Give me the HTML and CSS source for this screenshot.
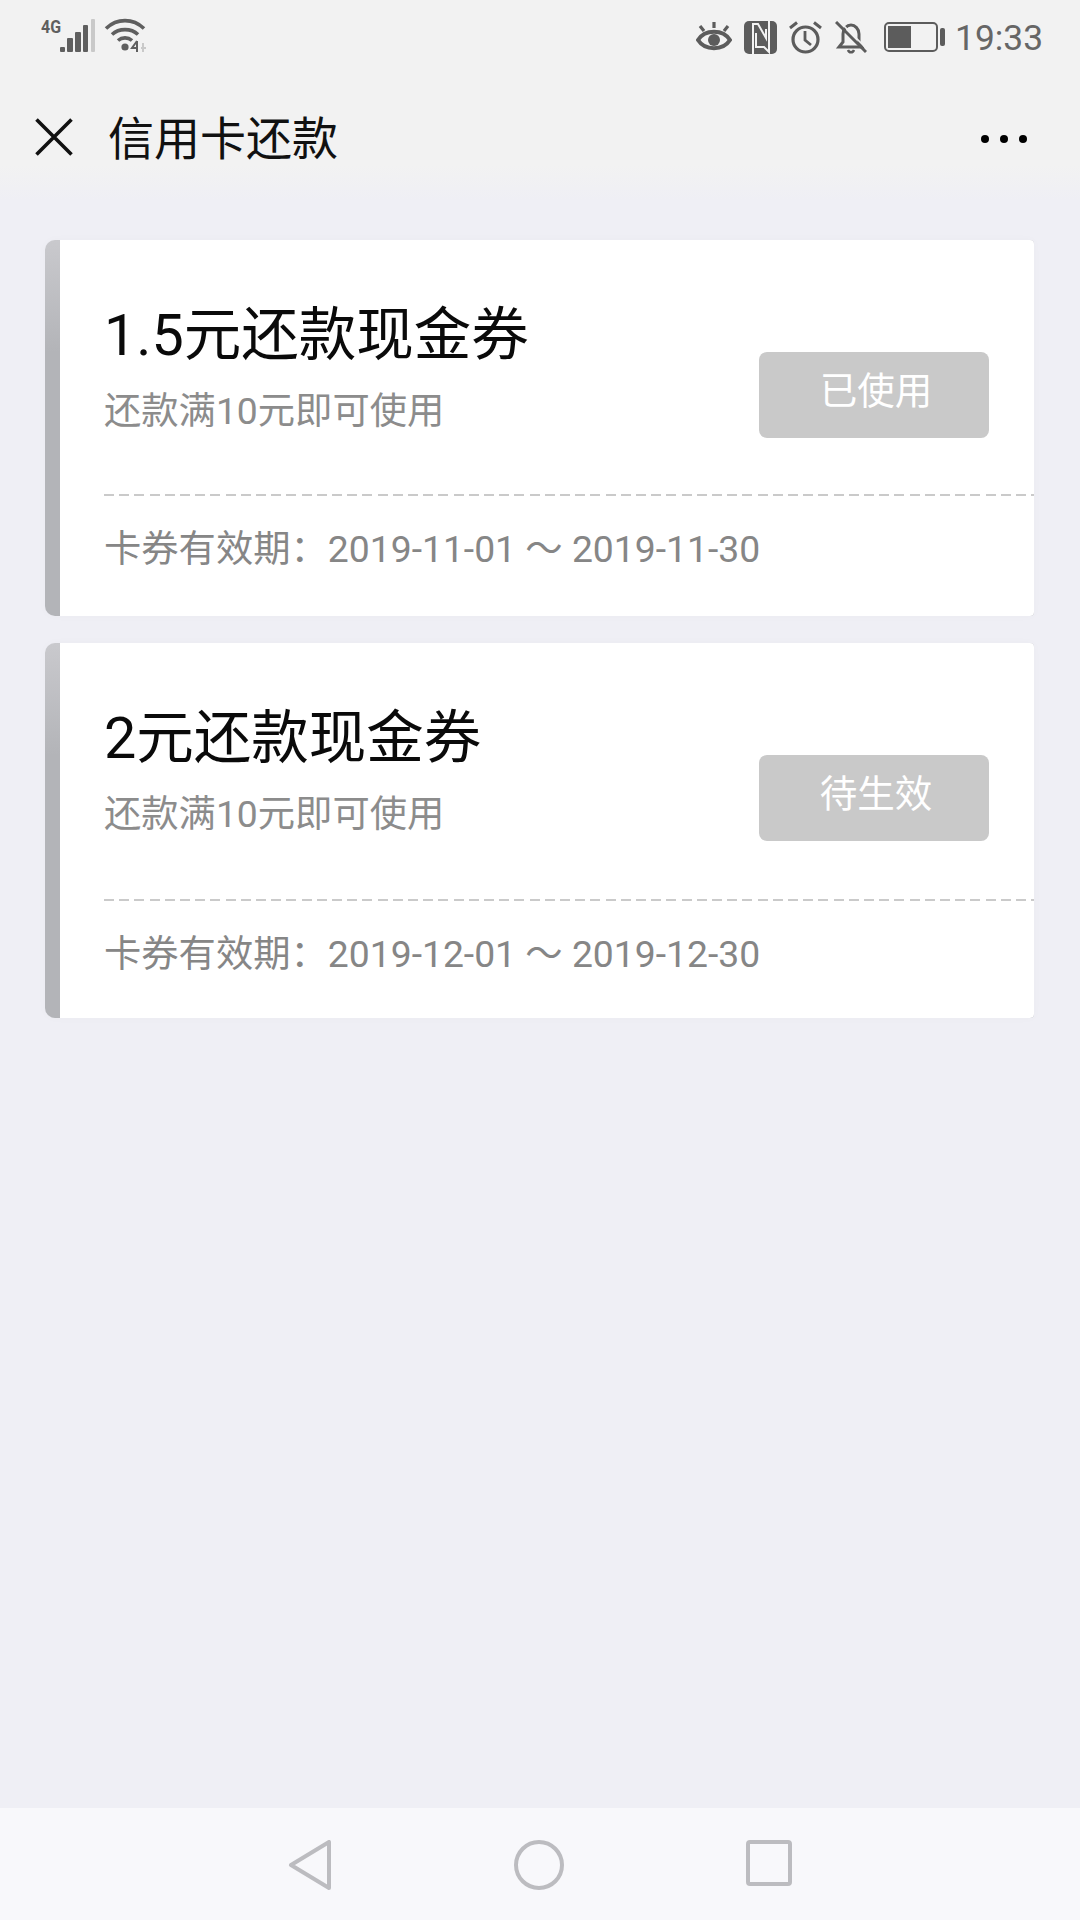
FILE: index.html
```html
<!DOCTYPE html>
<html lang="zh-CN">

<head>
  <meta charset="UTF-8">
  <meta name="viewport" content="width=device-width, initial-scale=1.0">
  <title>信用卡还款</title>
  <link rel="stylesheet" href="styles.css">
</head>

<body>
  <div class="top">
    <div class="status-bar">
      <svg class="signal" width="110" height="46" viewBox="0 -6 110 46">
        <text x="0" y="14" class="net-type" textLength="20" lengthAdjust="spacingAndGlyphs">4G</text>
        <rect x="19" y="28" width="5" height="5" rx="1" fill="#5f5f5f"/>
        <rect x="26" y="19" width="6" height="14" rx="1" fill="#5f5f5f"/>
        <rect x="34" y="13" width="6" height="20" rx="1" fill="#5f5f5f"/>
        <rect x="42" y="6" width="5" height="27" rx="1" fill="#5f5f5f"/>
        <rect x="50" y="0" width="4" height="33" rx="1" fill="#c9c9c9"/>
        <path d="M65 9.5 C76 -1 92 -1 103 9.5" fill="none" stroke="#5f5f5f" stroke-width="3.6"/>
        <path d="M71 15.5 C78 9 90 9 97 15.5" fill="none" stroke="#5f5f5f" stroke-width="3.6"/>
        <path d="M77 21.5 C81 18 87 18 91 21.5" fill="none" stroke="#5f5f5f" stroke-width="3.6"/>
        <circle cx="84" cy="28" r="3.6" fill="#5f5f5f"/>
        <path d="M96 22 L91 29 H97 M96 22 V33" fill="none" stroke="#5f5f5f" stroke-width="2"/>
        <path d="M102 24 V33 M100 29 H105" fill="none" stroke="#c9c9c9" stroke-width="2"/>
      </svg>
      <div class="status-right">
        <svg width="36" height="32" viewBox="0 0 36 32" class="ico-eye">
          <path d="M2 19 C9 8 27 8 34 19 C27 30 9 30 2 19 Z" fill="none" stroke="#5c5c5c" stroke-width="4"/>
          <circle cx="18" cy="19" r="6" fill="#5c5c5c"/>
          <path d="M18 1 V7 M4 5 L8 10 M32 5 L28 10" stroke="#5c5c5c" stroke-width="3.200" fill="none"/>
        </svg>
        <svg width="33" height="33" viewBox="0 0 33 33" class="ico-nfc">
          <rect width="33" height="33" rx="5" fill="#5c5c5c"/>
          <path d="M9 33 V3 H14 L22 17 V8 M12 12 V26 H20 L25 31 V0" fill="none" stroke="#f2f2f2" stroke-width="2"/>
        </svg>
        <svg width="33" height="33" viewBox="0 0 33 33" class="ico-alarm">
          <circle cx="16.500" cy="18.500" r="12.500" fill="none" stroke="#5c5c5c" stroke-width="3.200"/>
          <path d="M16 10 V19 L22 24" fill="none" stroke="#5c5c5c" stroke-width="2.800"/>
          <path d="M1 7 L8 1.500 M32 7 L25 1.500" stroke="#5c5c5c" stroke-width="3" fill="none"/>
        </svg>
        <svg width="32" height="33" viewBox="0 0 32 33" class="ico-bell">
          <path d="M4 26 H27 L24 21 V13 C24 8 20 4 16 4 C12 4 8 8 8 13 V21 Z" fill="none" stroke="#5c5c5c" stroke-width="3"/>
          <path d="M13 29 C14 32 18 32 19 29" fill="none" stroke="#5c5c5c" stroke-width="2.400"/>
          <path d="M1 1 L31 31" stroke="#5c5c5c" stroke-width="3"/>
          <path d="M4 0 L32 28" stroke="#f2f2f2" stroke-width="1.600"/>
        </svg>
        <svg width="61" height="30" viewBox="0 0 61 30" class="ico-battery">
          <rect x="1" y="1" width="52" height="28" rx="4" fill="none" stroke="#5c5c5c" stroke-width="2"/>
          <rect x="4" y="4" width="23" height="22" fill="#5c5c5c"/>
          <rect x="56" y="6" width="5" height="18" rx="2" fill="#5c5c5c"/>
        </svg>
        <span class="clock">19:33</span>
      </div>
    </div>

    <header class="title-bar">
      <svg class="close-ico" width="38" height="38" viewBox="0 0 38 38">
        <path d="M1.500 1.500 L36.500 36.500 M36.500 1.500 L1.500 36.500" stroke="#111" stroke-width="3.600" fill="none"/>
      </svg>
      <h1 class="page-title">信用卡还款</h1>
      <div class="more">
        <span class="dot"></span>
        <span class="dot"></span>
        <span class="dot"></span>
      </div>
    </header>
  </div>

  <main class="coupon-list">
    <section class="coupon">
      <div class="coupon-main">
        <div class="coupon-info">
          <h2 class="coupon-title">1.5元还款现金券</h2>
          <p class="coupon-rule">还款满10元即可使用</p>
        </div>
        <div class="coupon-btn">已使用</div>
      </div>
      <div class="dash-line"></div>
      <p class="coupon-date">卡券有效期：2019-11-01 ～ 2019-11-30</p>
    </section>

    <section class="coupon">
      <div class="coupon-main">
        <div class="coupon-info">
          <h2 class="coupon-title">2元还款现金券</h2>
          <p class="coupon-rule">还款满10元即可使用</p>
        </div>
        <div class="coupon-btn">待生效</div>
      </div>
      <div class="dash-line"></div>
      <p class="coupon-date">卡券有效期：2019-12-01 ～ 2019-12-30</p>
    </section>
  </main>

  <nav class="nav-bar">
    <svg width="44" height="50" viewBox="0 0 44 50">
      <path d="M41 2 V48 L3 25 Z" fill="none" stroke="#bcbcc0" stroke-width="4" stroke-linejoin="round"/>
    </svg>
    <svg width="50" height="50" viewBox="0 0 50 50">
      <circle cx="25" cy="25" r="23" fill="none" stroke="#bcbcc0" stroke-width="4"/>
    </svg>
    <svg width="46" height="46" viewBox="0 0 46 46">
      <rect x="2" y="2" width="42" height="42" rx="2" fill="none" stroke="#bcbcc0" stroke-width="4"/>
    </svg>
  </nav>
</body>

</html>
```

FILE: styles.css
```css
* {
  box-sizing: border-box;
}

body {
  margin: 0;
  width: 1080px;
  height: 1920px;
  display: flex;
  flex-direction: column;
  overflow: hidden;
  font-family: Roboto, 'Noto Sans CJK SC', sans-serif;
  background-color: #efeff5;
  color: #000;
}

.top {
  height: 200px;
  background: linear-gradient(#f2f2f2 165px, #efeff5 200px);
}

.status-bar {
  height: 75px;
  padding: 13px 37px 0 41px;
  display: flex;
  justify-content: space-between;
  align-items: flex-start;
}

.net-type {
  font-family: Roboto, sans-serif;
  font-size: 19px;
  font-weight: 700;
  fill: #5f5f5f;
}

.status-right {
  display: flex;
  align-items: center;
  height: 36px;
  margin-top: 6px;
}

.ico-eye {
  margin-right: 12px;
}

.ico-nfc {
  margin-right: 12px;
}

.ico-alarm {
  margin-right: 13px;
}

.ico-bell {
  margin-right: 17px;
}

.ico-battery {
  margin-right: 10px;
}

.clock {
  padding-top: 2px;
  font-size: 35.300px;
  line-height: 36px;
  color: #666;
}

.title-bar {
  height: 128px;
  padding: 0 53px 0 35px;
  display: flex;
  align-items: center;
}

.close-ico {
  margin-bottom: 4px;
}

.page-title {
  margin: 0 0 8px 35px;
  flex: 1;
  font-size: 46px;
  font-weight: 400;
  color: #111;
}

.more {
  display: flex;
  gap: 11px;
}

.dot {
  width: 8px;
  height: 8px;
  border-radius: 50%;
  background-color: #000;
}

.coupon-list {
  flex: 1;
  padding: 40px 0 0 45px;
  display: flex;
  flex-direction: column;
  gap: 27px;
}

.coupon {
  width: 989px;
  height: 376px;
  border-left: 15px solid transparent;
  border-radius: 10px 4px 4px 10px;
  background: linear-gradient(#fff, #fff) padding-box, linear-gradient(#c9c9cd, #b3b4b8 30%, #b3b4b8) border-box;
  box-shadow: 0 0 10px rgba(0, 0, 0, 0.025);
}

.coupon + .coupon {
  height: 375px;
}

.coupon-main {
  height: 254px;
  padding: 0 45px 0 44px;
  display: flex;
  justify-content: space-between;
}

.coupon + .coupon .coupon-main {
  height: 256px;
}

.coupon-title {
  margin: 58px 0 0;
  font-size: 57.500px;
  line-height: 76px;
  font-weight: 400;
  color: #0a0a0a;
}

.coupon-rule {
  margin: 0;
  padding-top: 15px;
  font-size: 37.300px;
  line-height: 44px;
  color: #8c8c8c;
}

.coupon-btn {
  width: 230px;
  height: 86px;
  margin-top: 112px;
  padding: 0 0 15px 4px;
  display: flex;
  align-items: center;
  justify-content: center;
  border-radius: 8px;
  background-color: #c9c9c9;
  color: #fff;
  font-size: 37.500px;
}

.dash-line {
  height: 2px;
  margin-left: 44px;
  background: repeating-linear-gradient(90deg, #cacaca 0 10px, transparent 10px 15.200px);
}

.coupon-date {
  margin: 0;
  padding: 31px 0 0 44px;
  font-size: 37.300px;
  line-height: 44px;
  color: #868686;
}

.nav-bar {
  height: 112px;
  padding: 32px 288px 0 288px;
  display: flex;
  justify-content: space-between;
  align-items: flex-start;
  background-color: #f8f8fb;
}
```
